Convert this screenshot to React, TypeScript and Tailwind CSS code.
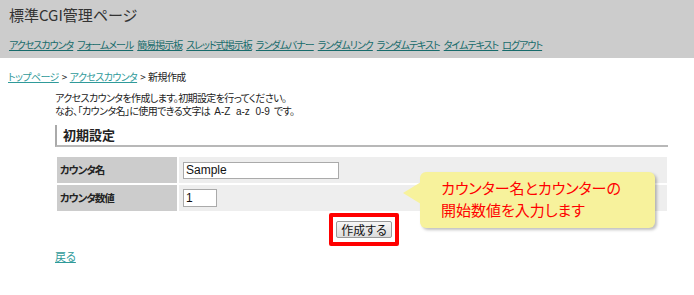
export default function App() {
  const navItems = [
    'アクセスカウンタ',
    'フォームメール',
    '簡易掲示板',
    'スレッド式掲示板',
    'ランダムバナー',
    'ランダムリンク',
    'ランダムテキスト',
    'タイムテキスト',
    'ログアウト',
  ]

  return (
    <div className="relative w-[694px] h-[295px] bg-white overflow-hidden font-['Noto_Sans_CJK_JP',sans-serif] text-[#222] [font-feature-settings:'palt']">
      {/* Header */}
      <header className="h-[58px] bg-[#cccccc] px-[9px] pt-[5px]">
        <h1 className="text-[15px] leading-[20px] text-[#333]">標準CGI管理ページ</h1>
        <nav className="mt-[13px] flex gap-[4px] text-[10px] leading-[13px] tracking-[-1px]">
          {navItems.map((item) => (
            <a key={item} href="#" className="text-[#176b6b] underline">
              {item}
            </a>
          ))}
        </nav>
      </header>

      {/* Breadcrumb */}
      <div className="px-[8px] mt-[12px] text-[10px] leading-[13px] tracking-[-0.6px]">
        <a href="#" className="text-[#2f9a9a] underline">トップページ</a>
        <span className="mx-[3px]">&gt;</span>
        <a href="#" className="text-[#2f9a9a] underline">アクセスカウンタ</a>
        <span className="mx-[3px]">&gt;</span>
        <span>新規作成</span>
      </div>

      {/* Content */}
      <main className="pl-[55px] w-[668px] mt-[9px]">
        <div className="text-[10px] leading-[12px] tracking-[-0.6px] flex flex-col gap-[1px]">
          <span>アクセスカウンタを作成します。初期設定を行ってください。</span>
          <span>
            なお、「カウンタ名」に使用できる文字は
            <span className="font-['Liberation_Sans',sans-serif] tracking-[0px] mx-[4px]">A-Z&nbsp; a-z&nbsp; 0-9</span>
            です。
          </span>
        </div>

        <div className="mt-[7px] h-[22px] border-l-2 border-l-[#aaaaaa] border-b-2 border-b-[#b8b8b8] pl-[6px] flex items-center">
          <h2 className="text-[13px] font-bold leading-[16px]">初期設定</h2>
        </div>

        <table className="mt-[8px] w-[614px] border-separate border-spacing-[2px] text-[10.5px]">
          <tbody>
            <tr className="h-[26px]">
              <th className="w-[120px] bg-[#cccccc] text-left font-bold pl-[3px] tracking-[-1px]">カウンタ名</th>
              <td className="bg-[#eeeeee] pl-[4px]">
                <input
                  type="text"
                  defaultValue="Sample"
                  className="block w-[156px] h-[17px] border border-[#aaaaaa] bg-white px-[2px] text-[12px] font-['Liberation_Sans',sans-serif] text-[#111] outline-none"
                />
              </td>
            </tr>
            <tr className="h-[26px]">
              <th className="w-[120px] bg-[#cccccc] text-left font-bold pl-[3px] tracking-[-1px]">カウンタ数値</th>
              <td className="bg-[#eeeeee] pl-[4px]">
                <input
                  type="text"
                  defaultValue="1"
                  className="block w-[34px] h-[18px] border border-[#aaaaaa] bg-white px-[2px] text-[12px] font-['Liberation_Sans',sans-serif] text-[#111] outline-none"
                />
              </td>
            </tr>
          </tbody>
        </table>

        <div className="flex justify-center pl-[5px]">
          <div className="border-[4px] border-[#ff0000] rounded-[2px] px-[3px] py-[4px]">
            <button className="block w-[56px] h-[17px] border border-[#999] rounded-[2px] bg-gradient-to-b from-[#f6f6f6] to-[#dcdcdc] text-[12px] leading-[15px] text-[#111]">
              作成する
            </button>
          </div>
        </div>

        <a href="#" className="block w-fit mt-[3px] text-[11px] leading-[14px] text-[#2f9a9a] underline">戻る</a>
      </main>

      {/* Callout bubble */}
      <div className="absolute left-[420px] top-[172px] w-[235px] h-[56px] rounded-[6px] bg-[#f7f29c] shadow-[2px_2px_3px_rgba(0,0,0,0.25)] pl-[21px] pt-[5px]">
        <svg className="absolute left-[-17px] top-[10px]" width="18" height="22" viewBox="0 0 18 22">
          <polygon points="18,0 0,11 18,22" fill="#f7f29c" />
        </svg>
        <p className="text-[15px] leading-[22px] text-[#ff0000]">
          カウンター名とカウンターの
          <br />
          開始数値を入力します
        </p>
      </div>
    </div>
  )
}
